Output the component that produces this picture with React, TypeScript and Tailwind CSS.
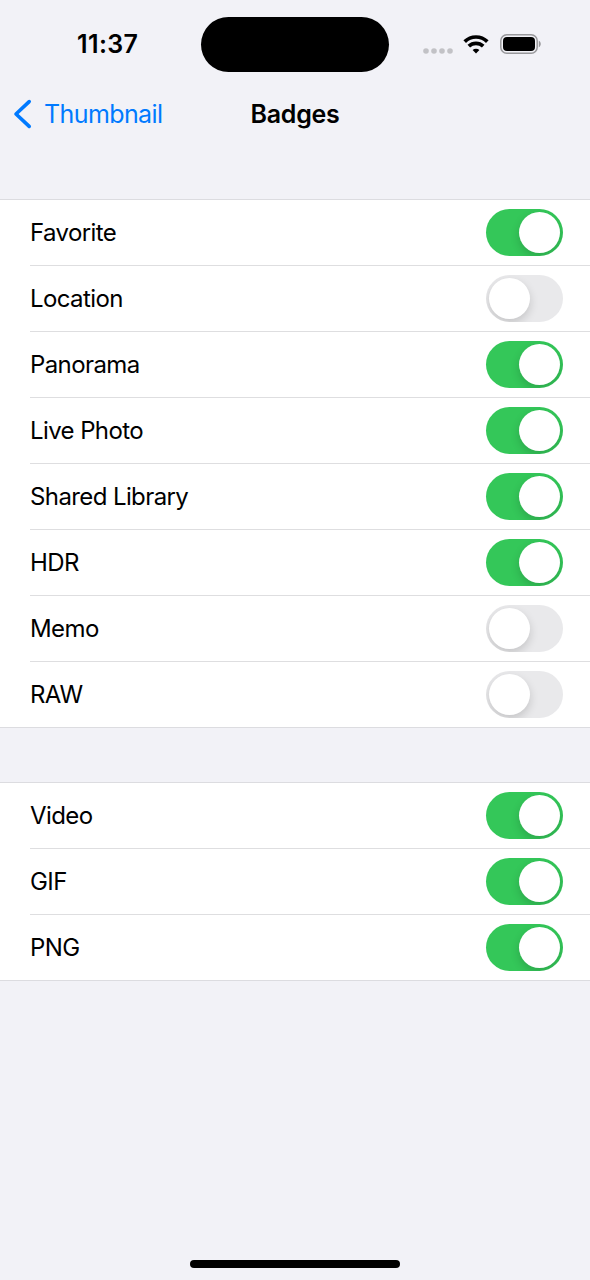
import { useState } from 'react';
import clsx from 'clsx';

type Badge = {
  name: string;
  enabled: boolean;
};

const SECTIONS: Badge[][] = [
  [
    { name: 'Favorite', enabled: true },
    { name: 'Location', enabled: false },
    { name: 'Panorama', enabled: true },
    { name: 'Live Photo', enabled: true },
    { name: 'Shared Library', enabled: true },
    { name: 'HDR', enabled: true },
    { name: 'Memo', enabled: false },
    { name: 'RAW', enabled: false },
  ],
  [
    { name: 'Video', enabled: true },
    { name: 'GIF', enabled: true },
    { name: 'PNG', enabled: true },
  ],
];

function SignalDots() {
  return (
    <svg width="30" height="6" viewBox="0 0 30 6" fill="#c2c2c6">
      {[3, 11, 19, 27].map((cx) => (
        <circle key={cx} cx={cx} cy="3" r="2.8" />
      ))}
    </svg>
  );
}

function WifiIcon() {
  return (
    <svg width="26" height="19" viewBox="0 0 26 19" fill="none" stroke="black" strokeWidth="3.7">
      <path d="M1.7 6.6a16.2 16.2 0 0 1 22.6 0" />
      <path d="M5.8 11.2a10.4 10.4 0 0 1 14.4 0" />
      <path d="M13 18.5l-3.4-3.5a4.9 4.9 0 0 1 6.8 0z" fill="black" stroke="none" />
    </svg>
  );
}

function BatteryIcon() {
  return (
    <svg width="42" height="20" viewBox="0 0 42 20" fill="none">
      <rect x="0.8" y="0.8" width="36.4" height="18.4" rx="6" stroke="#98989b" strokeWidth="1.5" />
      <rect x="3" y="3" width="32" height="14" rx="4" fill="black" />
      <path d="M38.8 6.8c2.6 1 2.6 5.4 0 6.4z" fill="#98989b" />
    </svg>
  );
}

function StatusBar() {
  return (
    <div className="flex h-[89px] items-center">
      <div className="w-[201px] pl-[77px] text-[25px] leading-none font-semibold tracking-[0.4px]">
        11:37
      </div>
      <div className="h-[55px] w-[188px] rounded-full bg-black" />
      <div className="mb-px ml-[34px] flex items-center">
        <div className="mt-[13px]">
          <SignalDots />
        </div>
        <div className="ml-[10px]">
          <WifiIcon />
        </div>
        <div className="ml-[11px]">
          <BatteryIcon />
        </div>
      </div>
    </div>
  );
}

function NavBar() {
  return (
    <header className="grid h-[51px] grid-cols-[1fr_auto_1fr] items-center">
      <button className="flex items-center pl-[13px] text-[25px] leading-none text-[#007aff]">
        <svg className="mb-px" width="20" height="30" viewBox="0 0 20 30" fill="none">
          <path
            d="M16.2 2.6L3 15l13.2 12.4"
            stroke="currentColor"
            strokeWidth="3.6"
            strokeLinecap="round"
            strokeLinejoin="round"
          />
        </svg>
        <span className="ml-[11px] tracking-[-0.6px]">Thumbnail</span>
      </button>
      <h1 className="text-[25px] leading-none font-semibold tracking-[-0.3px]">Badges</h1>
      <span />
    </header>
  );
}

function Toggle({ on, label, onChange }: { on: boolean; label: string; onChange: () => void }) {
  return (
    <button
      role="switch"
      aria-checked={on}
      aria-label={label}
      onClick={onChange}
      className={clsx(
        'flex h-[47px] w-[77px] items-center overflow-hidden rounded-full px-[3px]',
        on ? 'justify-end bg-[#34c759]' : 'justify-start bg-[#e9e9eb]',
      )}
    >
      <span className="size-[41px] rounded-full bg-white shadow-[0_4px_10px_rgba(0,0,0,0.16)]" />
    </button>
  );
}

export default function App() {
  const [sections, setSections] = useState(SECTIONS);

  const toggle = (name: string) =>
    setSections((prev) =>
      prev.map((rows) => rows.map((b) => (b.name === name ? { ...b, enabled: !b.enabled } : b))),
    );

  return (
    <div className="flex h-[1280px] w-[590px] flex-col bg-[#f2f2f7] font-[Inter,'Liberation_Sans',sans-serif] text-black">
      <StatusBar />
      <NavBar />

      <main className="mt-[59px] flex flex-col gap-[54px]">
        {sections.map((rows, i) => (
          <ul key={i} className="border-y border-[#dcdce0] bg-white pl-[30px]">
            {rows.map((badge, j) => (
              <li
                key={badge.name}
                className={clsx(
                  'flex items-center justify-between pr-[27px]',
                  j === rows.length - 1 ? 'h-[65px]' : 'h-[66px] border-b border-[#dedee0]',
                )}
              >
                <span className="pt-px text-[24px] leading-8 tracking-[-0.6px]">{badge.name}</span>
                <Toggle
                  on={badge.enabled}
                  label={badge.name}
                  onChange={() => toggle(badge.name)}
                />
              </li>
            ))}
          </ul>
        ))}
      </main>

      {/* Home indicator */}
      <div className="mt-auto mb-[12px] h-[8px] w-[210px] self-center rounded-full bg-black" />
    </div>
  );
}
